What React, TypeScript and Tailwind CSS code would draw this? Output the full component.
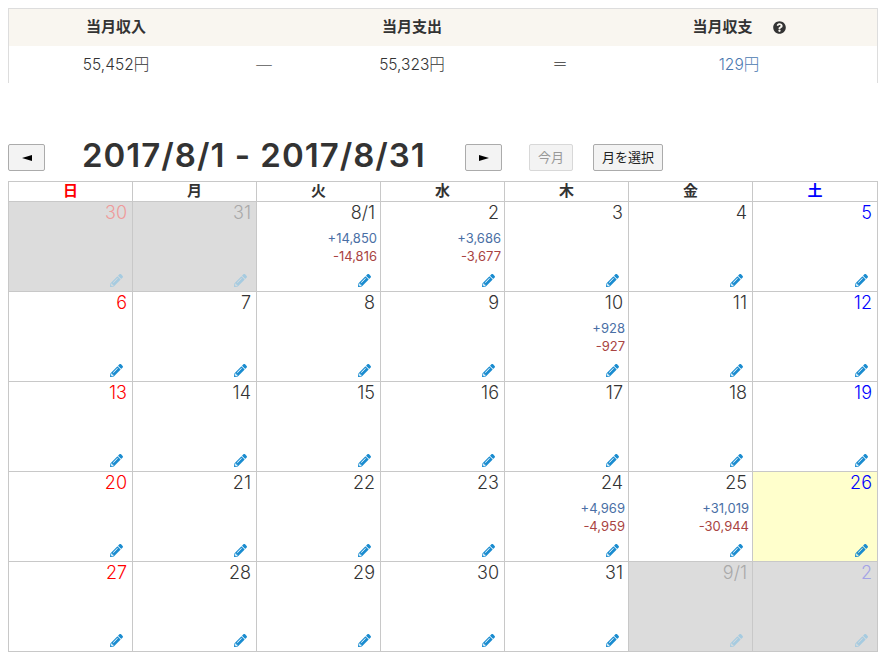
import type { ReactNode } from "react";
import { FaPencilAlt, FaQuestionCircle } from "react-icons/fa";

type Day = { d: string; tone?: "sun" | "sat"; muted?: boolean; plus?: string; minus?: string; today?: boolean };

const days: Day[] = [
  { d: "30", tone: "sun", muted: true }, { d: "31", muted: true }, { d: "8/1", plus: "+14,850", minus: "-14,816" }, { d: "2", plus: "+3,686", minus: "-3,677" }, { d: "3" }, { d: "4" }, { d: "5", tone: "sat" },
  { d: "6", tone: "sun" }, { d: "7" }, { d: "8" }, { d: "9" }, { d: "10", plus: "+928", minus: "-927" }, { d: "11" }, { d: "12", tone: "sat" },
  { d: "13", tone: "sun" }, { d: "14" }, { d: "15" }, { d: "16" }, { d: "17" }, { d: "18" }, { d: "19", tone: "sat" },
  { d: "20", tone: "sun" }, { d: "21" }, { d: "22" }, { d: "23" }, { d: "24", plus: "+4,969", minus: "-4,959" }, { d: "25", plus: "+31,019", minus: "-30,944" }, { d: "26", tone: "sat", today: true },
  { d: "27", tone: "sun" }, { d: "28" }, { d: "29" }, { d: "30" }, { d: "31" }, { d: "9/1", muted: true }, { d: "2", tone: "sat", muted: true },
];

const weekdays = [
  { t: "日", c: "text-[#ff0000]" }, { t: "月", c: "text-[#333333]" }, { t: "火", c: "text-[#333333]" }, { t: "水", c: "text-[#333333]" },
  { t: "木", c: "text-[#333333]" }, { t: "金", c: "text-[#333333]" }, { t: "土", c: "text-[#0000ff]" },
];

function dateColor(day: Day) {
  if (day.tone === "sun") return day.muted ? "text-[#ef9a9a]" : "text-[#ff0000]";
  if (day.tone === "sat") return day.muted ? "text-[#a3a3e6]" : "text-[#0000ff]";
  return day.muted ? "text-[#a9a9a9]" : "text-[#333333]";
}

function Cell({ day }: { day: Day }) {
  const bg = day.muted ? "bg-[#dcdcdc]" : day.today ? "bg-[#ffffcc]" : "bg-white";
  return (
    <div className={`flex h-[90px] flex-col border-r border-b border-[#c8c8c8] ${bg}`}>
      <div className={`h-[24px] pr-[5px] text-right text-[18px] leading-[22px] font-light ${dateColor(day)}`}>{day.d}</div>
      {day.plus && (
        <div className="mt-[3px] pr-[3px] text-right text-[13px] leading-[18px]">
          <div className="text-[#4a6fa5]">{day.plus}</div>
          <div className="text-[#a94442]">{day.minus}</div>
        </div>
      )}
      <div className="mt-auto flex justify-end pr-[9px] pb-[4px]">
        <FaPencilAlt className={`h-[13px] w-[13px] ${day.muted ? "text-[#a6cbe0]" : "text-[#1a8cd0]"}`} />
      </div>
    </div>
  );
}

function NavButton({ children, className = "" }: { children: ReactNode; className?: string }) {
  return (
    <button className={`flex h-[27px] items-center justify-center rounded-[2px] border border-[#ababab] bg-[#f3f3f3] text-[13px] text-[#222222] ${className}`}>
      {children}
    </button>
  );
}

export default function App() {
  return (
    <div className="h-[663px] w-[886px] bg-white pt-[8px] pl-[8px] text-[#333333] [font-family:Inter,'Noto_Sans_CJK_JP',sans-serif]">
      <div className="w-[870px] border-x border-t border-[#dddddd]">
        <div className="grid h-[37px] grid-cols-[214px_82px_214px_82px_276px] items-center bg-[#f9f6f0] text-[15px] font-bold">
          <div className="text-center">当月収入</div>
          <div />
          <div className="text-center">当月支出</div>
          <div />
          <div className="flex items-center justify-center">
            当月収支
            <FaQuestionCircle className="ml-[20px] h-[13px] w-[13px] text-[#333333]" />
          </div>
        </div>
        <div className="grid h-[37px] grid-cols-[214px_82px_214px_82px_276px] items-center text-[15.5px] font-light">
          <div className="text-center">55,452円</div>
          <div className="text-center text-[#777777]">—</div>
          <div className="text-center">55,323円</div>
          <div className="text-center">＝</div>
          <div className="text-center text-[#4a78b0]">129円</div>
        </div>
      </div>

      <div className="mt-[61px] flex h-[27px] items-center">
        <NavButton className="w-[37px]">
          <span className="block h-0 w-0 border-y-[3px] border-r-[10px] border-y-transparent border-r-black" />
        </NavButton>
        <h1 className="ml-[37px] w-[383px] pb-[4px] text-[33px] leading-[27px] font-semibold tracking-[1px] whitespace-nowrap text-[#333333]">2017/8/1 - 2017/8/31</h1>
        <NavButton className="w-[37px]">
          <span className="block h-0 w-0 border-y-[3px] border-l-[10px] border-y-transparent border-l-black" />
        </NavButton>
        <NavButton className="ml-[27px] w-[44px] border-[#d8d8d8] text-[#999999]">今月</NavButton>
        <NavButton className="ml-[20px] w-[70px]">月を選択</NavButton>
      </div>

      <div className="mt-[10px] grid w-[870px] grid-cols-[repeat(6,124px)_125px] border-t border-l border-[#c8c8c8]">
        {weekdays.map((w) => (
          <div key={w.t} className={`h-[20px] border-r border-b border-[#c8c8c8] text-center text-[15px] leading-[18px] font-bold ${w.c}`}>
            {w.t}
          </div>
        ))}
        {days.map((day, i) => (
          <Cell key={i} day={day} />
        ))}
      </div>
    </div>
  );
}
